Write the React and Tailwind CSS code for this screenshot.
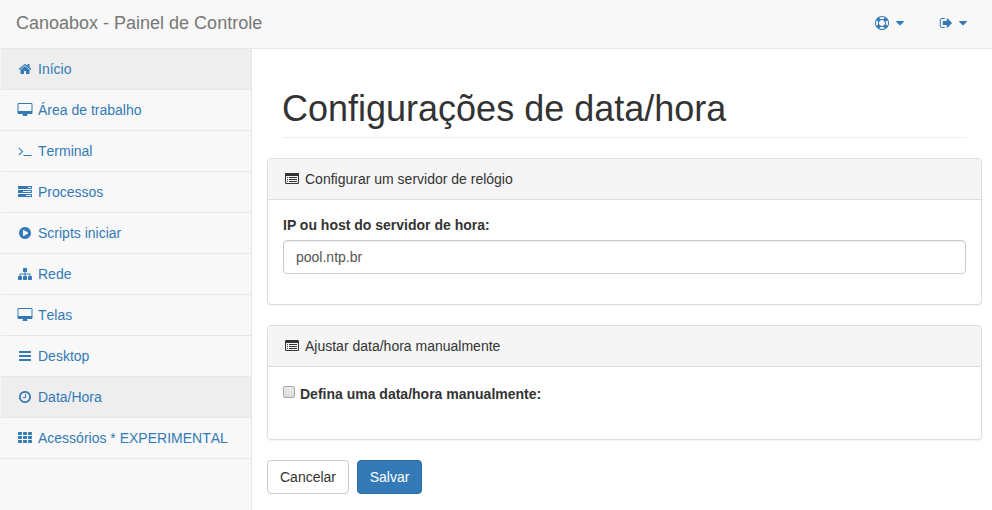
const rect = (x, y, w, h, r) =>
  `M${x + r} ${y}h${w - 2 * r}q${r} 0 ${r} ${r}v${h - 2 * r}q0 ${r} ${-r} ${r}h${2 * r - w}q${-r} 0 ${-r} ${-r}v${2 * r - h}q0 ${-r} ${r} ${-r}z`;

const ICONS = {
  home: 'M1472 992v480q0 26-19 45t-45 19h-384v-384h-256v384h-384q-26 0-45-19t-19-45v-480q0-1 .5-3t.5-3l575-474 575 474q1 2 1 6zm223-69l-62 74q-8 9-21 11h-3q-13 0-21-7l-692-577-692 577q-12 8-24 7-13-2-21-11l-62-74q-8-10-7-23.5t11-21.5l719-599q32-26 76-26t76 26l244 204v-195q0-14 9-23t23-9h192q14 0 23 9t9 23v408l219 182q10 8 11 21.5t-7 23.5z',
  desktop: 'M1792 992v-832q0-13-9.5-22.5t-22.5-9.5h-1600q-13 0-22.5 9.5t-9.5 22.5v832q0 13 9.5 22.5t22.5 9.5h1600q13 0 22.5-9.5t9.5-22.5zm128-832v1088q0 66-47 113t-113 47h-544q0 37 16 77.5t32 71 16 43.5q0 26-19 45t-45 19h-512q-26 0-45-19t-19-45q0-14 16-44t32-70 16-78h-544q-66 0-113-47t-47-113v-1088q0-66 47-113t113-47h1600q66 0 113 47t47 113z',
  terminal: 'M649 983l-466 466q-10 10-23 10t-23-10l-50-50q-10-10-10-23t10-23l393-393-393-393q-10-10-10-23t10-23l50-50q10-10 23-10t23 10l466 466q10 10 10 23t-10 23zm1079 457v64q0 14-9 23t-23 9h-960q-14 0-23-9t-9-23v-64q0-14 9-23t23-9h960q14 0 23 9t9 23z',
  tasks: [128, 640, 1152].map((y) => rect(0, y, 1792, 384, 64)).join('') + 'M1280 256h384v128h-384zM640 768h1024v128h-1024zM1024 1280h640v128h-640z',
  play: 'M896 128q209 0 385.5 103t279.5 279.5 103 385.5-103 385.5-279.5 279.5-385.5 103-385.5-103-279.5-279.5-103-385.5 103-385.5 279.5-279.5 385.5-103zm384 823q32-18 32-55t-32-55l-544-320q-31-19-64-1-32 19-32 56v640q0 37 32 56 16 8 32 8 17 0 32-9z',
  sitemap: 'M1792 1248v320q0 40-28 68t-68 28h-320q-40 0-68-28t-28-68v-320q0-40 28-68t68-28h96v-192h-512v192h96q40 0 68 28t28 68v320q0 40-28 68t-68 28h-320q-40 0-68-28t-28-68v-320q0-40 28-68t68-28h96v-192h-512v192h96q40 0 68 28t28 68v320q0 40-28 68t-68 28h-320q-40 0-68-28t-28-68v-320q0-40 28-68t68-28h96v-192q0-52 38-90t90-38h512v-192h-96q-40 0-68-28t-28-68v-320q0-40 28-68t68-28h320q40 0 68 28t28 68v320q0 40-28 68t-68 28h-96v192h512q52 0 90 38t38 90v192h96q40 0 68 28t28 68z',
  bars: [256, 768, 1280].map((y) => rect(128, y, 1536, 256, 64)).join(''),
  clock: 'M1024 544v448q0 14-9 23t-23 9h-320q-14 0-23-9t-9-23v-64q0-14 9-23t23-9h224v-352q0-14 9-23t23-9h64q14 0 23 9t9 23zm416 352q0-148-73-273t-198-198-273-73-273 73-198 198-73 273 73 273 198 198 273 73 273-73 198-198 73-273zm224 0q0 209-103 385.5t-279.5 279.5-385.5 103-385.5-103-279.5-279.5-103-385.5 103-385.5 279.5-279.5 385.5-103 385.5 103 279.5 279.5 103 385.5z',
  th: [128, 640, 1152].map((y) => [0, 640, 1280].map((x) => rect(x, y, 512, 384, 96)).join('')).join(''),
  ring: 'M896 0q182 0 348 71t286 191 191 286 71 348-71 348-191 286-286 191-348 71-348-71-286-191-191-286-71-348 71-348 191-286 286-191 348-71zm0 128q-190 0-361 90l194 194q82-28 167-28t167 28l194-194q-171-90-361-90zm-678 1129l194-194q-28-82-28-167t28-167l-194-194q-90 171-90 361t90 361zm678 407q190 0 361-90l-194-194q-82 28-167 28t-167-28l-194 194q171 90 361 90zm0-384q159 0 271.5-112.5t112.5-271.5-112.5-271.5-271.5-112.5-271.5 112.5-112.5 271.5 112.5 271.5 271.5 112.5zm484-217l194 194q90-171 90-361t-90-361l-194 194q28 82 28 167t-28 167z',
  signOut: 'M704 1440q0 4 1 20t.5 26.5-3 23.5-10 19.5-20.5 6.5h-320q-119 0-203.5-84.5t-84.5-203.5v-704q0-119 84.5-203.5t203.5-84.5h320q13 0 22.5 9.5t9.5 22.5q0 4 1 20t.5 26.5-3 23.5-10 19.5-20.5 6.5h-320q-66 0-113 47t-47 113v704q0 66 47 113t113 47h312l11.5 1 11.5 3 8 5.5 7 9 2 13.5zm928-544q0 26-19 45l-544 544q-19 19-45 19t-45-19-19-45v-288h-448q-26 0-45-19t-19-45v-384q0-26 19-45t45-19h448v-288q0-26 19-45t45-19 45 19l544 544q19 19 19 45z',
  caret: 'M1408 704q0 26-19 45l-448 448q-19 19-45 19t-45-19l-448-448q-19-19-19-45t19-45 45-19h896q26 0 45 19t19 45z',
  listAlt: rect(0, 128, 1792, 1408, 160) + rect(128, 512, 1536, 896, 32) + [640, 896, 1152].map((y) => rect(256, y, 128, 128, 32) + rect(512, y, 1024, 128, 32)).join(''),
};

const VIEW_BOXES = {
  desktop: '-64 0 2048 1792',
  signOut: '-160 0 1792 1792',
};

function Icon({ name }) {
  return (
    <span className="flex w-[18px] shrink-0 justify-center">
      <svg
        className={name === 'desktop' ? 'h-[14px] w-[16px]' : 'size-[14px]'}
        viewBox={VIEW_BOXES[name] ?? '0 0 1792 1792'}
        fill="currentColor"
        fillRule="evenodd"
        aria-hidden="true"
      >
        <path d={ICONS[name]} />
      </svg>
    </span>
  );
}

const MENU = [
  { icon: 'home', label: 'Início', active: true },
  { icon: 'desktop', label: 'Área de trabalho' },
  { icon: 'terminal', label: 'Terminal' },
  { icon: 'tasks', label: 'Processos' },
  { icon: 'play', label: 'Scripts iniciar' },
  { icon: 'sitemap', label: 'Rede' },
  { icon: 'desktop', label: 'Telas' },
  { icon: 'bars', label: 'Desktop' },
  { icon: 'clock', label: 'Data/Hora', active: true },
  { icon: 'th', label: 'Acessórios * EXPERIMENTAL' },
];

function Panel({ title, className, children }) {
  return (
    <section className={`rounded border border-[#ddd] bg-white shadow-[0_1px_1px_rgba(0,0,0,0.05)] ${className}`}>
      <header className="flex items-center gap-1 rounded-t-[3px] border-b border-[#ddd] bg-[#f5f5f5] px-[15px] py-[10px]">
        <Icon name="listAlt" />
        <h2>{title}</h2>
      </header>
      <div className="p-[15px]">{children}</div>
    </section>
  );
}

export default function App() {
  return (
    <div className="flex h-[510px] w-[992px] flex-col overflow-hidden bg-[#f8f8f8] font-['Liberation_Sans',Arial,sans-serif] text-[14px] leading-[20px] text-[#333]">
      <header className="flex h-[49px] shrink-0 items-center justify-between border-b border-[#e7e7e7] pr-[20px] pl-[16px]">
        <span className="pb-[3px] text-[18px] text-[#777]">Canoabox - Painel de Controle</span>
        <div className="flex gap-[27px] pb-[2px] text-[#337ab7]">
          <button className="flex items-center" aria-label="Ajuda">
            <Icon name="ring" />
            <Icon name="caret" />
          </button>
          <button className="flex items-center" aria-label="Sair">
            <Icon name="signOut" />
            <Icon name="caret" />
          </button>
        </div>
      </header>
      <div className="flex min-h-0 flex-1">
        <nav className="w-[251px] shrink-0 pl-px [font-kerning:none]">
          <ul>
            {MENU.map(({ icon, label, active }) => (
              <li key={label} className="border-b border-[#e7e7e7]">
                <a className={`flex items-center gap-1 px-[15px] py-[10px] text-[#337ab7] ${active ? 'bg-[#eee]' : ''}`}>
                  <Icon name={icon} />
                  {label}
                </a>
              </li>
            ))}
          </ul>
        </nav>
        <main className="flex-1 border-l border-[#e7e7e7] bg-white pr-[10px] pl-[15px]">
          <h1 className="mx-[15px] mt-[40px] mb-[20px] border-b border-[#eee] pb-[9px] text-[36px] leading-[39px]">
            Configurações de data/hora
          </h1>
          <Panel title="Configurar um servidor de relógio" className="mb-[20px] h-[147px]">
            <label className="mb-[5px] block font-bold" htmlFor="host">
              IP ou host do servidor de hora:
            </label>
            <input
              id="host"
              defaultValue="pool.ntp.br"
              className="block h-[34px] w-full rounded border border-[#ccc] bg-white px-3 py-[6px] text-[#555] shadow-[inset_0_1px_1px_rgba(0,0,0,0.075)]"
            />
          </Panel>
          <Panel title="Ajustar data/hora manualmente" className="mb-[20px] h-[115px]">
            <label className="flex items-start pt-[2px] font-bold">
              <input
                type="checkbox"
                className="mt-[2px] mr-[5px] size-3 appearance-none rounded-[2px] border border-[#a8a8a8] bg-linear-to-b from-[#ededed] to-[#dcdcdc]"
              />
              Defina uma data/hora manualmente:
            </label>
          </Panel>
          <div className="flex gap-2">
            <button className="rounded border border-[#ccc] bg-white px-3 py-[6px]">Cancelar</button>
            <button className="w-[65px] rounded border border-[#2e6da4] bg-[#337ab7] py-[6px] text-white">Salvar</button>
          </div>
        </main>
      </div>
    </div>
  );
}
